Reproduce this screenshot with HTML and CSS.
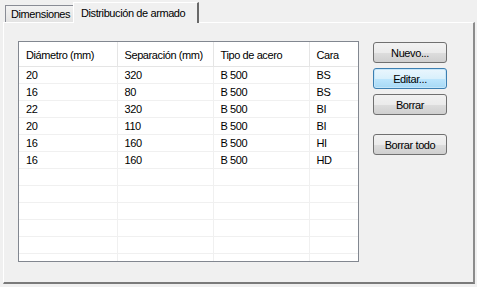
FILE: index.html
```html
<!DOCTYPE html>
<html lang="es">
<head>
    <meta charset="UTF-8">
    <title>Distribución de armado</title>
    <link rel="stylesheet" href="styles.css">
</head>
<body>
    <div class="tabs">
        <div class="tab">Dimensiones</div>
        <div class="tab active">Distribución de armado</div>
    </div>
    <div class="panel">
        <div class="list">
            <table>
                <thead>
                    <tr>
                        <th class="c1">Diámetro (mm)</th>
                        <th class="c2">Separación (mm)</th>
                        <th class="c3">Tipo de acero</th>
                        <th class="c4">Cara</th>
                    </tr>
                </thead>
                <tbody>
                    <tr><td>20</td><td>320</td><td>B 500</td><td>BS</td></tr>
                    <tr><td>16</td><td>80</td><td>B 500</td><td>BS</td></tr>
                    <tr><td>22</td><td>320</td><td>B 500</td><td>BI</td></tr>
                    <tr><td>20</td><td>110</td><td>B 500</td><td>BI</td></tr>
                    <tr><td>16</td><td>160</td><td>B 500</td><td>HI</td></tr>
                    <tr><td>16</td><td>160</td><td>B 500</td><td>HD</td></tr>
                    <tr><td></td><td></td><td></td><td></td></tr>
                    <tr><td></td><td></td><td></td><td></td></tr>
                    <tr><td></td><td></td><td></td><td></td></tr>
                    <tr><td></td><td></td><td></td><td></td></tr>
                    <tr><td></td><td></td><td></td><td></td></tr>
                    <tr><td></td><td></td><td></td><td></td></tr>
                </tbody>
            </table>
        </div>
        <div class="buttons">
            <button class="btn">Nuevo...</button>
            <button class="btn focus">Editar...</button>
            <button class="btn">Borrar</button>
            <button class="btn spaced">Borrar todo</button>
        </div>
    </div>
</body>
</html>
```

FILE: styles.css
```css
* {
    box-sizing: border-box;
}

body {
    margin: 0;
    width: 477px;
    height: 287px;
    background: #f0f0f0;
    color: #000;
    font-family: 'Liberation Sans', Arial, sans-serif;
    font-size: 11px;
    letter-spacing: -0.4px;
    overflow: hidden;
}

.tabs {
    display: flex;
    align-items: flex-end;
    height: 22px;
    padding-left: 5px;
}

.tab {
    height: 17px;
    padding: 2px 0 0 5px;
    width: 68px;
    border: 1px solid #898c95;
    border-bottom: none;
    border-right: none;
    background: linear-gradient(#f2f2f2, #e3e3e3);
}

.tab.active {
    position: relative;
    z-index: 1;
    width: 126px;
    height: 21px;
    margin-bottom: -1px;
    padding: 4px 0 0 7px;
    background: #f0f0f0;
    border-top-color: #ffffff;
    border-left-color: #ffffff;
    border-right: 2px solid #696969;
}

.panel {
    display: flex;
    align-items: flex-start;
    margin-left: 3px;
    width: 472px;
    height: 262px;
    padding: 18px 0 0 14px;
    border-top: 1px solid #ffffff;
    border-left: 1px solid #ffffff;
    border-right: 2px solid #8c8c8c;
    border-bottom: 2px solid #7a7a7a;
}

.list {
    width: 341px;
    height: 221px;
    background: #fff;
    border: 1px solid #828790;
    overflow: hidden;
}

table {
    border-collapse: collapse;
    table-layout: fixed;
    width: 339px;
}

th {
    height: 24px;
    padding: 2px 0 0 7px;
    font-weight: normal;
    text-align: left;
    border-right: 1px solid #e5e5e5;
    border-bottom: 1px solid #e5e5e5;
    white-space: nowrap;
}

th.c1 { width: 98px; }
th.c2 { width: 96px; }
th.c3 { width: 96px; }
th.c4 { border-right: none; }

td {
    height: 17px;
    padding: 1px 0 0 7px;
    border-right: 1px solid #f0f0f0;
    border-bottom: 1px solid #f0f0f0;
    white-space: nowrap;
}

td:last-child {
    border-right: none;
}

.buttons {
    display: flex;
    flex-direction: column;
    gap: 5px;
    margin: 1px 0 0 14px;
}

.btn {
    width: 74px;
    height: 21px;
    padding: 0;
    border: 1px solid #707070;
    border-radius: 3px;
    background: linear-gradient(#f2f2f2 0%, #ebebeb 50%, #dddddd 51%, #cfcfcf 100%);
    font-family: inherit;
    font-size: 11px;
    letter-spacing: -0.4px;
    color: #000;
}

.btn.focus {
    border-color: #3c7fb1;
    background: linear-gradient(#eaf6fd 0%, #d9f0fc 50%, #bee6fd 51%, #a7d9f5 100%);
    box-shadow: inset 0 0 0 1px #c6e6f9;
}

.btn.spaced {
    margin-top: 14px;
}
```
